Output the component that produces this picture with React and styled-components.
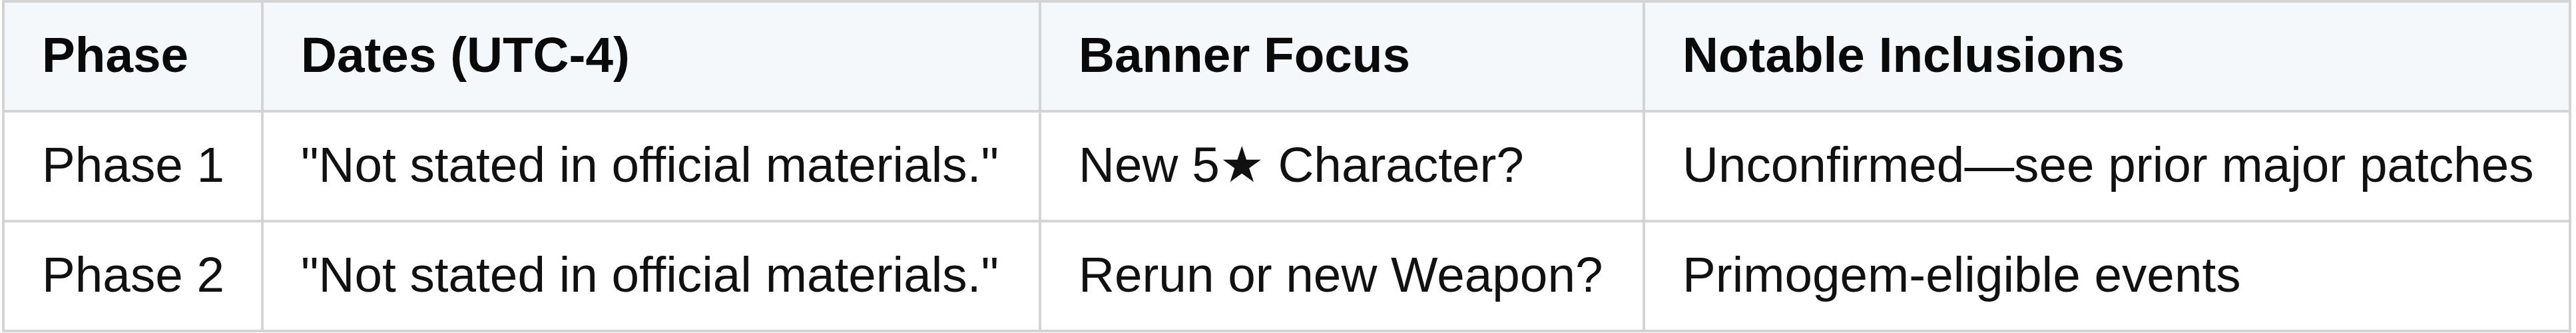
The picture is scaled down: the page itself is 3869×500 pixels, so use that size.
import React from "react";
import styled, { createGlobalStyle } from "styled-components";

const GlobalStyle = createGlobalStyle`
  html, body {
    margin: 0;
    padding: 0;
    background: #ffffff;
  }
  body {
    font-family: "Liberation Sans", Arial, "DejaVu Sans", sans-serif;
    color: #111111;
  }
`;

const Table = styled.table`
  border-spacing: 0;
  table-layout: fixed;
  width: 3859px;
  margin-left: 3px;
  border-top: 4px solid #d4d4d4;
  border-left: 4px solid #d4d4d4;
  font-family: "Liberation Sans", Arial, "DejaVu Sans", sans-serif;
  font-size: 74.7px;
  line-height: 85px;
`;

const Col = styled.col`
  width: ${(p) => p.$w}px;
`;

const HeadRow = styled.tr`
  background: #f5f8fa;
`;

const Cell = styled.td`
  box-sizing: border-box;
  height: 165px;
  padding: 36px 40px 40px 56px;
  border-right: 4px solid #d4d4d4;
  border-bottom: 4px solid #d4d4d4;
  text-align: left;
  vertical-align: middle;
  white-space: nowrap;
  font-weight: 400;
  color: #111111;
`;

const HeadCell = styled(Cell).attrs({ as: "th" })`
  font-weight: 700;
  color: #0a0a0a;
`;

const columns = [389, 1168, 907, 1391];
const headers = ["Phase", "Dates (UTC-4)", "Banner Focus", "Notable Inclusions"];
const rows = [
  [
    "Phase 1",
    "\"Not stated in official materials.\"",
    "New 5★ Character?",
    "Unconfirmed—see prior major patches",
  ],
  [
    "Phase 2",
    "\"Not stated in official materials.\"",
    "Rerun or new Weapon?",
    "Primogem-eligible events",
  ],
];

export default function App() {
  return (
    <>
      <GlobalStyle />
      <Table>
        <colgroup>
          {columns.map((w, i) => (
            <Col key={i} $w={w} />
          ))}
        </colgroup>
        <thead>
          <HeadRow>
            {headers.map((h) => (
              <HeadCell key={h}>{h}</HeadCell>
            ))}
          </HeadRow>
        </thead>
        <tbody>
          {rows.map((r, i) => (
            <tr key={i}>
              {r.map((c, j) => (
                <Cell key={j}>{c}</Cell>
              ))}
            </tr>
          ))}
        </tbody>
      </Table>
    </>
  );
}
